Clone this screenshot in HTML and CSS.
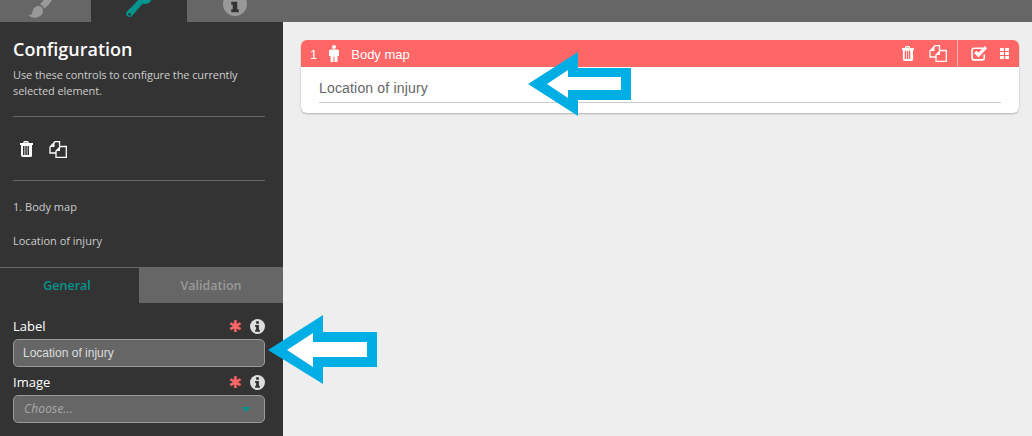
FILE: index.html
```html
<!DOCTYPE html>
<html lang="en">
  <head>
    <meta charset="UTF-8" />
    <title>Form builder</title>
    <link rel="stylesheet" href="styles.css">
  </head>
  <body>
    <svg width="0" height="0" class="defs">
      <symbol id="i-trash" viewBox="0 0 14 16">
        <path fill="currentColor" fill-rule="evenodd" d="M5 0h4l1 2h4v2h-1v10.500q0 1.500-1.500 1.500h-7Q2 16 2 14.500V4H1V2h3zM5.500 1.500 5.200 2h3.600l-.3-.5zM4 5v9h1.500V5zm2.300 0v9h1.500V5zM8.500 5v9H10V5z" />
      </symbol>
      <symbol id="i-copy" viewBox="0 0 18 17">
        <path fill="none" stroke="currentColor" stroke-width="1.300" d="M6.500 12H1V6l5-5.300h4.500v4.500M7 16.300h10.300V5.500h-5.800L7 10z" />
        <path fill="currentColor" d="M5.500 2v4H1.500zM11 6.500V10H7.500z" />
      </symbol>
      <symbol id="i-info" viewBox="0 0 16 16">
        <circle cx="8" cy="8" r="8" fill="currentColor" />
        <path fill="#333" d="M6.500 2.500h3v2.500h-3zM5.500 6.500h4v5h1v2h-5v-2h1v-3h-1z" />
      </symbol>
    </svg>

    <div class="topbar">
      <div class="toptab">
        <svg class="brush" width="26" height="30" viewBox="0 0 26 30">
          <path fill="currentColor" d="M24 1c1.500 1 1 3-1 7-2 3.500-5 7-8 8.500-.5-2-2-3.500-4-4C14 9 21-1 24 1zM9.500 14c2.500 0 4.500 2 4.500 4.500 0 5-5 8-10.500 7-2-.5-3.500-1.500-3.500-2.500 2.500 0 3-1 3.500-3.500C4 16.500 6 14 9.500 14z" />
        </svg>
      </div>
      <div class="toptab on">
        <svg class="wrench" width="28" height="30" viewBox="0 0 28 30">
          <path fill="currentColor" fill-rule="evenodd" d="M19 1c1.200 0 2.300.2 3.300.7l-4.500 4 .5 3.800 3.700 1 4.500-4c.6 1 .8 2.200.5 3.500-.5 3.700-4 6.500-7.800 6-.6 0-1-.2-1.500-.4L7 28q-2.200 2.200-4.700 0t0-4.700L13.300 12c-.3-1-.4-2-.2-3 .5-4.300 3-8 5.900-8zM4.500 25a1.400 1.400 0 1 0 .1 0z" />
        </svg>
      </div>
      <div class="toptab">
        <svg class="tabinfo" width="24" height="24" viewBox="0 0 16 16"><use href="#i-info" class="tabinfo-use" /></svg>
      </div>
    </div>

    <div class="page">
      <aside class="side">
        <div class="intro">
          <h1>Configuration</h1>
          <p>Use these controls to configure the currently selected element.</p>
        </div>
        <div class="tools">
          <svg width="14" height="16"><use href="#i-trash" /></svg>
          <svg width="18" height="17"><use href="#i-copy" /></svg>
        </div>
        <div class="crumbs">
          <div>1. Body map</div>
          <div>Location of injury</div>
        </div>
        <div class="subtabs">
          <div class="subtab on">General</div>
          <div class="subtab">Validation</div>
        </div>
        <div class="fields">
          <div class="fieldhead">
            <span>Label</span>
            <span class="star">✱</span>
            <svg width="15" height="15"><use href="#i-info" /></svg>
          </div>
          <div class="input">Location of injury</div>
          <div class="fieldhead">
            <span>Image</span>
            <span class="star">✱</span>
            <svg width="15" height="15"><use href="#i-info" /></svg>
          </div>
          <div class="input select">
            <span>Choose...</span>
            <i class="caret"></i>
          </div>
        </div>
      </aside>

      <main class="canvas">
        <section class="card">
          <header class="cardhead">
            <span class="num">1</span>
            <svg class="man" width="10" height="17" viewBox="0 0 10 17">
              <circle cx="5" cy="2" r="2" fill="currentColor" />
              <path fill="currentColor" d="M1.500 4.500h7Q10 4.500 10 6v5H8.500v6h-3v-5.500h-1V17h-3v-6H0V6q0-1.500 1.500-1.500z" />
            </svg>
            <span class="title">Body map</span>
            <div class="headtools">
              <svg width="13" height="15"><use href="#i-trash" /></svg>
              <svg width="18" height="17"><use href="#i-copy" /></svg>
            </div>
            <div class="headtools last">
              <svg width="17" height="15" viewBox="0 0 16 14">
                <path fill="none" stroke="currentColor" stroke-width="1.500" d="M12.500 8v3q0 2-2 2H3q-2 0-2-2V4q0-2 2-2h8" />
                <path fill="none" stroke="currentColor" stroke-width="3" d="m4 5.500 3 3 7-7.500" />
              </svg>
              <svg width="9" height="13" viewBox="0 0 10 12">
                <path fill="currentColor" d="M0 0h4.300v3.300H0zM5.700 0H10v3.300H5.700zM0 4.400h4.300v3.300H0zM5.700 4.400H10v3.300H5.700zM0 8.700h4.300V12H0zM5.700 8.700H10V12H5.700z" />
              </svg>
            </div>
          </header>
          <div class="cardbody">
            <div class="question">Location of injury</div>
          </div>
        </section>
      </main>
    </div>

    <svg class="arrow arrow-one" width="103" height="64" viewBox="528 52 103 64">
      <path fill="#00aee6" d="M528 84 578 52v16h53v32h-53v16z" />
      <path fill="#fff" d="M547 84 568 70v7h53v13h-53v8z" />
    </svg>
    <svg class="arrow arrow-two" width="109" height="69" viewBox="268 315 109 69">
      <path fill="#00aee6" d="M268 350 323 315v17h54v35h-54v17z" />
      <path fill="#fff" d="M287 350 313 333v9h54v15h-54v10z" />
    </svg>
  </body>
</html>
```

FILE: styles.css
```css
* {
  box-sizing: border-box;
}
html,
body {
  height: 100%;
}
body {
  margin: 0;
  overflow: hidden;
  display: flex;
  flex-direction: column;
  background: #eeeeee;
  font-family: "Open Sans", "Liberation Sans", sans-serif;
}
.defs {
  position: absolute;
}
.topbar {
  display: flex;
  height: 22px;
  flex: none;
  background: #666666;
}
.toptab {
  width: 96px;
  height: 22px;
  display: flex;
  justify-content: center;
  align-items: flex-end;
  padding-bottom: 4px;
  overflow: hidden;
  color: #999999;
}
.toptab:first-child {
  width: 91px;
}
.toptab svg {
  flex: none;
}
.toptab.on {
  background: #333333;
  color: #00968f;
}
.toptab .brush {
  margin: 0 8px -4px 0;
}
.toptab .tabinfo {
  margin-bottom: 2px;
}
.tabinfo-use {
  color: #999999;
}

.page {
  flex: 1;
  display: flex;
  min-height: 0;
}
.side {
  width: 283px;
  flex: none;
  background: #333333;
  color: #dddddd;
  font-size: 11px;
}
.intro {
  margin: 0 18px 0 13px;
  height: 95px;
  padding-top: 15px;
  border-bottom: 1px solid #666666;
}
.intro h1 {
  margin: 0 0 6px;
  font-size: 18px;
  line-height: 24px;
  font-weight: 600;
  color: #ffffff;
}
.intro p {
  margin: 0;
  line-height: 16px;
  letter-spacing: -0.09px;
  color: #cccccc;
}
.tools {
  margin: 0 18px 0 13px;
  height: 64px;
  padding: 24px 0 0 6px;
  display: flex;
  align-items: flex-start;
  gap: 16px;
  border-bottom: 1px solid #666666;
  color: #ffffff;
}
.crumbs {
  height: 86px;
  padding: 18px 13px 0;
  color: #cccccc;
  line-height: 16px;
}
.crumbs div + div {
  margin-top: 18px;
}
.subtabs {
  display: flex;
  height: 36px;
  border-top: 1px solid #666666;
  font-size: 12.5px;
  font-weight: 600;
}
.subtab {
  flex: 1;
  display: flex;
  align-items: center;
  justify-content: center;
  background: #666666;
  color: #999999;
}
.subtab.on {
  flex: none;
  width: 139px;
  padding-right: 5px;
  background: #333333;
  color: #00968f;
}
.fields {
  padding: 14px 18px 0 13px;
}
.fieldhead {
  display: flex;
  align-items: center;
  height: 18px;
  font-size: 13px;
  color: #ffffff;
}
.fieldhead span:first-child {
  flex: 1;
}
.fieldhead svg {
  color: #dddddd;
  margin-left: 8px;
}
.star {
  color: #ff6666;
  font-size: 16px;
  font-weight: 700;
  font-family: "DejaVu Sans", sans-serif;
}
.input {
  height: 28px;
  margin: 4px 0 6px;
  padding: 0 9px;
  display: flex;
  align-items: center;
  background: #666666;
  border: 1px solid #999999;
  border-radius: 5px;
  font-family: "Liberation Sans", Arial, sans-serif;
  font-size: 12px;
  color: #dddddd;
}
.select {
  justify-content: space-between;
  padding: 0 14px 1px 10px;
  color: #aaaaaa;
  font-family: "Open Sans", "Liberation Sans", sans-serif;
  font-style: italic;
  letter-spacing: 0.15px;
}
.caret {
  width: 0;
  height: 0;
  margin-top: 2px;
  border: 4px solid transparent;
  border-top: 5px solid #00968f;
  border-bottom: 0;
}

.canvas {
  flex: 1;
  padding: 18px 13px 0 18px;
}
.card {
  height: 73px;
  background: #ffffff;
  border-radius: 6px;
  box-shadow: 0 1px 2px rgba(0, 0, 0, 0.25);
  font-family: "Liberation Sans", Arial, sans-serif;
}
.cardhead {
  height: 27px;
  display: flex;
  align-items: center;
  padding-left: 9px;
  background: #ff6666;
  border-radius: 6px 6px 0 0;
  color: #ffffff;
  font-size: 13px;
}
.num {
  padding-top: 1px;
}
.man {
  margin-left: 12px;
}
.title {
  flex: 1;
  margin-left: 12px;
  padding-top: 1px;
}
.headtools {
  display: flex;
  align-items: center;
  gap: 15px;
  height: 27px;
  padding-right: 10px;
}
.headtools.last {
  border-left: 1px solid #ffb3b3;
  gap: 12px;
  padding: 0 10px 0 13px;
}
.cardbody {
  padding: 11px 18px 0;
}
.question {
  height: 25px;
  line-height: 20px;
  font-size: 14px;
  letter-spacing: 0.17px;
  color: #666666;
  border-bottom: 1px solid #cccccc;
}

.arrow {
  position: absolute;
}
.arrow-one {
  left: 528px;
  top: 52px;
}
.arrow-two {
  left: 268px;
  top: 315px;
}
```
